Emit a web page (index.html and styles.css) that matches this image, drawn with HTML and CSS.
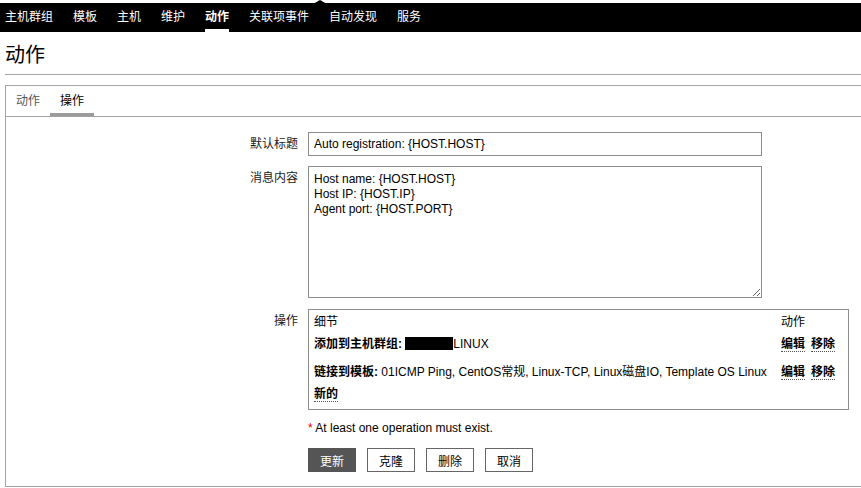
FILE: index.html
```html
<!DOCTYPE html>
<html lang="zh-CN">
<head>
<meta charset="utf-8">
<title>动作</title>
<link rel="stylesheet" href="styles.css">
</head>
<body>
<span class="notch"></span>
<nav class="topbar">
  <a class="menu-item">主机群组</a>
  <a class="menu-item">模板</a>
  <a class="menu-item">主机</a>
  <a class="menu-item">维护</a>
  <a class="menu-item active">动作</a>
  <a class="menu-item">关联项事件</a>
  <a class="menu-item">自动发现</a>
  <a class="menu-item">服务</a>
</nav>
<header class="page-header">
  <h1 class="page-title">动作</h1>
</header>
<section class="tab-box">
  <div class="tabs">
    <span class="tab">动作</span>
    <span class="tab active">操作</span>
  </div>
  <form class="form">
    <label class="form-label label-input">默认标题</label>
    <div class="form-field"><input class="text-input" type="text" value="Auto registration: {HOST.HOST}"></div>

    <label class="form-label label-area">消息内容</label>
    <div class="form-field"><textarea class="text-area">Host name: {HOST.HOST}
Host IP: {HOST.IP}
Agent port: {HOST.PORT}</textarea></div>

    <label class="form-label label-ops">操作</label>
    <div class="form-field">
      <div class="ops-box">
        <div class="ops-row ops-head">
          <span>细节</span>
          <span>动作</span>
        </div>
        <div class="ops-row ops-entry">
          <span><b>添加到主机群组:</b> <span class="redact"></span>LINUX</span>
          <span class="ops-actions"><a class="link">编辑</a><a class="link second">移除</a></span>
        </div>
        <div class="ops-row ops-entry">
          <span><b>链接到模板:</b> 01ICMP Ping, CentOS常规, Linux-TCP, Linux磁盘IO, Template OS Linux</span>
          <span class="ops-actions"><a class="link">编辑</a><a class="link second">移除</a></span>
        </div>
        <div class="ops-row ops-new">
          <span><a class="link">新的</a></span>
        </div>
      </div>
    </div>

    <span class="form-label"></span>
    <div class="form-field warning"><span class="star">*</span> At least one operation must exist.</div>

    <span class="form-label"></span>
    <div class="form-field buttons">
      <button type="button" class="btn btn-main">更新</button>
      <button type="button" class="btn">克隆</button>
      <button type="button" class="btn">删除</button>
      <button type="button" class="btn">取消</button>
    </div>
  </form>
</section>
</body>
</html>
```
FILE: styles.css
```css
html, body {
  margin: 0;
  padding: 0;
  overflow: hidden;
  background: #fff;
}
body {
  font-family: "Liberation Sans", "Noto Sans CJK SC", sans-serif;
  font-size: 12px;
  color: #000;
  width: 861px;
  height: 488px;
  position: relative;
}
.notch {
  position: absolute;
  left: 313px;
  top: 0;
  width: 0;
  height: 0;
  border-left: 7px solid transparent;
  border-right: 7px solid transparent;
  border-bottom: 4px solid #000;
}
.topbar {
  margin-top: 3px;
  height: 29px;
  background: #000;
  display: flex;
  gap: 20px;
  padding-left: 5px;
}
.menu-item {
  color: #fff;
  line-height: 23px;
  padding-top: 3px;
  border-bottom: 3px solid transparent;
}
.menu-item.active {
  font-weight: bold;
  border-bottom-color: #fff;
}
.page-header {
  margin: 11px 0 0 5px;
  border-bottom: 1px solid #a3a3a3;
  padding-bottom: 7px;
}
.page-title {
  margin: 0;
  font-size: 20px;
  font-weight: normal;
  line-height: 24px;
}
.tab-box {
  margin-top: 10px;
  margin-left: 5px;
  width: 855px;
  border: 1px solid #a3a3a3;
  border-right: none;
  height: 400px;
}
.tabs {
  display: flex;
  border-bottom: 1px solid #a3a3a3;
}
.tab {
  padding: 3px 10px 0;
  line-height: 24px;
  border-bottom: 3px solid transparent;
  color: #555;
}
.tab.active {
  color: #000;
  border-bottom-color: #9a9a9a;
}
.form {
  display: grid;
  grid-template-columns: 292px 541px;
  column-gap: 10px;
  padding-top: 15px;
}
.form-label {
  text-align: right;
  color: #1a1a1a;
}
.label-input { line-height: 24px; margin-bottom: 10px; }
.label-area { padding-top: 5px; line-height: 15px; }
.label-ops { padding-top: 5px; line-height: 15px; }
.form-field { min-width: 0; }
.text-input {
  box-sizing: border-box;
  width: 454px;
  height: 24px;
  border: 1px solid #8c8c8c;
  padding: 0 5px;
  font: inherit;
  color: #000;
  margin: 0 0 10px 0;
  display: block;
}
.text-area {
  box-sizing: border-box;
  width: 454px;
  height: 132px;
  border: 1px solid #8c8c8c;
  padding: 5px 5px 4px;
  font: inherit;
  line-height: 15px;
  color: #000;
  margin: 0 0 11px 0;
  display: block;
}
.ops-box {
  box-sizing: border-box;
  width: 541px;
  height: 101px;
  border: 1px solid #8c8c8c;
  padding: 5px 0 0 5px;
}
.ops-row {
  display: grid;
  grid-template-columns: 467px 66px;
}
.ops-head { line-height: 15px; }
.ops-entry { line-height: 28px; }
.ops-new { line-height: 16px; }
.redact {
  display: inline-block;
  width: 48px;
  height: 13px;
  background: #000;
  vertical-align: -2px;
}
.ops-actions {
  white-space: nowrap;
}
.link {
  font-weight: bold;
  color: #000;
  border-bottom: 1px dotted #555;
}
.link.second {
  margin-left: 6px;
}
.warning {
  margin-top: 11px;
  line-height: 14px;
}
.star { color: #d00; }
.buttons {
  margin-top: 13px;
  display: flex;
  gap: 11px;
}
.btn {
  box-sizing: border-box;
  height: 24px;
  width: 48px;
  border: 1px solid #666;
  background: #fff;
  font: inherit;
  color: #000;
  padding: 0;
}
.btn-main {
  background: #555;
  border-color: #555;
  color: #fff;
}
```
